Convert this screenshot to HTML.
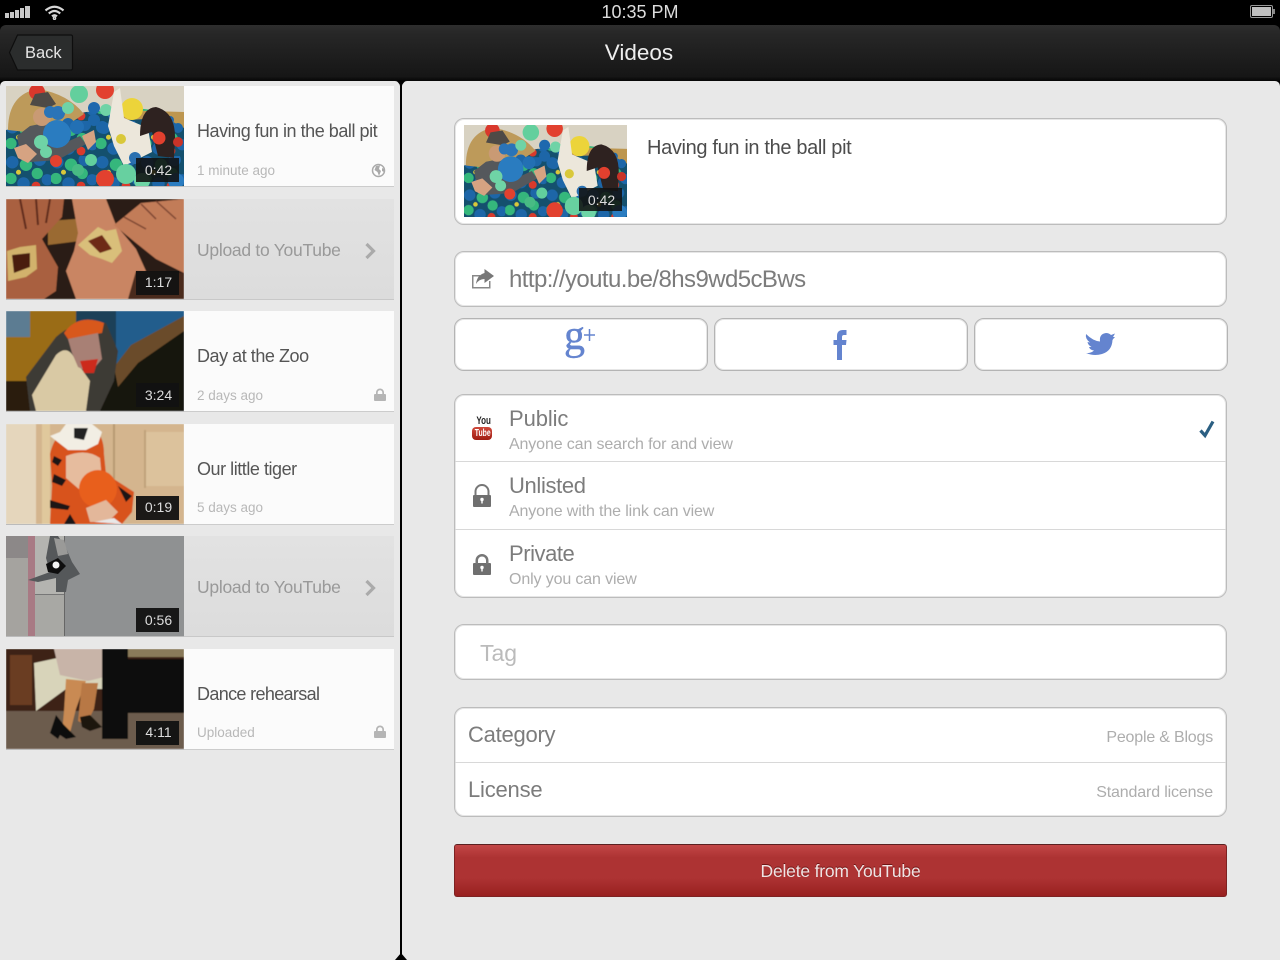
<!DOCTYPE html>
<html>
<head>
<meta charset="utf-8">
<title>Videos</title>
<style>
html,body{margin:0;padding:0;background:#000;}
#p{position:relative;width:1280px;height:960px;overflow:hidden;background:#000;font-family:"Liberation Sans",sans-serif;}
#p div,#p svg,#p span{position:absolute;}
.t{white-space:nowrap;line-height:1;}
.cell{left:184px;width:210px;height:100px;background:#fbfbfb;border-bottom:1px solid #ccc;}
.up{background:linear-gradient(#e2e2e2,#dcdcdc);border-bottom:1px solid #c8c8c8;}
.th{left:6px;width:178px;height:100px;overflow:hidden;border-bottom:1px solid #bbb;}
.dur{width:43px;left:137px;text-align:center;font-size:14px;color:#ddd;}
.box{background:#fff;border:1px solid #bcbcbc;box-shadow:inset 0 0 0 1px #e6e6e6;border-radius:10px;box-sizing:border-box;left:454px;width:773px;}
.name{font-size:18px;color:#555;left:197px;letter-spacing:-.46px;}
.sub{font-size:13.5px;color:#b8b8b8;left:197px;}
.up-t{left:197px;font-size:17.5px;color:#999;letter-spacing:-.27px;}
.big{font-size:22px;color:#7c7c7c;}
.small{font-size:16px;color:#adadad;left:509px;letter-spacing:-.13px;}
.hr{left:455px;width:771px;height:1px;background:#d8d8d8;}
</style>
</head>
<body>
<div id="p">
<svg width="0" height="0" style="left:0;top:0">
<defs>
<filter id="b"><feGaussianBlur stdDeviation=".6"/></filter>
<pattern id="balls" width="36" height="28" patternUnits="userSpaceOnUse" patternTransform="scale(1.25)">
<rect width="36" height="28" fill="#14506e"/>
<g fill="#1d66a8"><circle cx="5" cy="5" r="5"/><circle cx="27" cy="3" r="5"/><circle cx="14" cy="22" r="5"/><circle cx="33" cy="19" r="4.500"/></g>
<g fill="#35b77c"><circle cx="16" cy="7" r="5"/><circle cx="4" cy="18" r="4.500"/><circle cx="25" cy="14" r="4.500"/></g>
<g fill="#d93a2c"><circle cx="24" cy="24" r="3.500"/></g>
<g fill="#d9c83a"><circle cx="10" cy="13" r="2"/></g>
</pattern>
<g id="pit">
<rect width="178" height="100" fill="url(#balls)"/>
<path d="M0 0H178V28L130 22L80 26L60 30L0 44Z" fill="#d8d2c2"/>
<path d="M2 44Q2 8 32 3Q62 8 78 28L60 40L20 46Z" fill="#bd9a5a"/>
<path d="M108 24L178 26V42L160 32L120 34Z" fill="#bd964f"/>
<g fill="#1d66a8"><circle cx="62" cy="38" r="6"/><circle cx="88" cy="34" r="6"/><circle cx="98" cy="42" r="6"/><circle cx="172" cy="42" r="5"/><circle cx="164" cy="34" r="4"/></g>
<circle cx="100" cy="24" r="6" fill="#6fd3a6"/><circle cx="88" cy="22" r="6" fill="#1e68ae"/>
<circle cx="31" cy="6" r="8" fill="#d9382c"/><circle cx="73" cy="8" r="9" fill="#63cf9d"/><circle cx="99" cy="4" r="9" fill="#e2412f"/>
<circle cx="126" cy="23" r="11" fill="#ecd43a"/>
<path d="M11 50L24 40L44 36L52 60L74 50L80 58L52 74L24 76L14 66Z" fill="#55585c"/>
<circle cx="36" cy="31" r="9" fill="#c99a74"/><path d="M24 19L29 8L42 6L50 18L42 22Z" fill="#4e4a46"/>
<path d="M8 62L20 58L31 68L22 77L12 72Z" fill="#d6a382"/><path d="M76 50L88 44L90 56L82 64Z" fill="#d6a382"/>
<circle cx="52" cy="27" r="7" fill="#2a74b8"/><circle cx="44" cy="26" r="6" fill="#2a74b8"/><circle cx="62" cy="22" r="6" fill="#70d3a6"/>
<circle cx="51" cy="48" r="14" fill="#2a7cc0"/><circle cx="71" cy="41" r="7" fill="#2370b4"/><circle cx="35" cy="56" r="7" fill="#6fd3a6"/><circle cx="40" cy="66" r="6" fill="#6fd3a6"/>
<path d="M102 40L108 6L114 2L118 32L142 42L146 66L118 80L108 60Z" fill="#ece7db"/>
<path d="M134 50Q134 22 150 21Q170 26 169 54L168 72L152 70L146 46Z" fill="#2e2220"/>
<circle cx="153" cy="52" r="6.500" fill="#e2402e"/><circle cx="129" cy="72" r="6" fill="#2a70b0"/><circle cx="115" cy="53" r="5" fill="#d9c83a"/>
<circle cx="172" cy="56" r="5" fill="#c93328"/>
<circle cx="50" cy="75" r="6" fill="#e2412f"/><circle cx="99" cy="93" r="9" fill="#e2412f"/>
<circle cx="85" cy="74" r="6" fill="#62cf9d"/><circle cx="72" cy="84" r="6" fill="#48bb84"/>
<circle cx="120" cy="88" r="10" fill="#67d0a0"/><circle cx="136" cy="95" r="8" fill="#6ed5a6"/><circle cx="170" cy="95" r="8" fill="#2a7cc0"/>
</g>
<g id="lock" fill="#b5b5b5"><path d="M1 6h10a1 1 0 0 1 1 1v5a1 1 0 0 1-1 1H1a1 1 0 0 1-1-1V7a1 1 0 0 1 1-1z"/><path d="M2 6V4.500a4 4 0 0 1 8 0V6H8.300V4.500a2.300 2.300 0 0 0-4.600 0V6z"/></g>
</defs>
</svg>

<!-- status bar -->
<svg style="left:5px;top:5px" width="26" height="14"><g fill="#c8c8c8"><rect x="0" y="8" width="4" height="5"/><rect x="5" y="7" width="4" height="6"/><rect x="10" y="5" width="4" height="8"/><rect x="15" y="3" width="4" height="10"/><rect x="20" y="1" width="5" height="12"/></g></svg>
<svg style="left:44px;top:4px" width="21" height="16" fill="none" stroke="#d8d8d8" stroke-width="2.200"><path d="M1.500 6.500Q10.500 -1 19.500 6.500"/><path d="M4.800 9.500Q10.500 4.500 16.200 9.500"/><path d="M8 12.300Q10.500 10.200 13 12.300"/><circle cx="10.500" cy="14.200" r=".7"/></svg>
<div class="t" style="left:540px;width:200px;text-align:center;top:3px;font-size:18px;color:#ddd;">10:35 PM</div>
<div style="left:1250px;top:5px;width:23px;height:13px;border:1px solid #999;box-sizing:border-box;border-radius:2px;background:#000;"><div style="left:1px;top:1px;right:1px;bottom:1px;background:#c0c0c0;"></div></div>
<div style="left:1273px;top:9px;width:2px;height:5px;background:#888;"></div>

<!-- nav -->
<div style="left:0;top:25px;width:1280px;height:56px;border-radius:6px 6px 0 0;background:linear-gradient(#2e2e2e,#272727 15%,#161616 92%,#050505);"></div>
<svg style="left:8px;top:34px" width="66" height="38"><path d="M9.500 1H63a1.500 1.500 0 0 1 1.500 1.500V34.500a1.500 1.500 0 0 1-1.500 1.500H9.500L1.500 18.500Z" fill="#2b2d2d" stroke="#0e0e0e" stroke-width="1.200"/></svg>
<div class="t" style="left:25px;top:45px;font-size:16.500px;color:#e6e6e6;">Back</div>
<div class="t" style="left:539px;width:200px;text-align:center;top:42px;font-size:22.500px;color:#eee;">Videos</div>

<!-- panels -->
<div style="left:0;top:81px;width:400px;height:879px;background:#e8e8e8;border-radius:5px 5px 0 0;"></div>
<div style="left:402px;top:81px;width:878px;height:879px;background:#e8e8e8;border-radius:5px 5px 0 0;"></div>

<!-- row 1 -->
<div class="cell" style="top:86px"></div>
<div class="th" style="top:86px"><svg width="178" height="100"><use href="#pit"/><rect x="130" y="72" width="43" height="24" fill="#111" opacity=".88"/></svg></div>
<div class="t dur" style="top:163px;">0:42</div>
<div class="t name" style="top:122px;">Having fun in the ball pit</div>
<div class="t sub" style="top:164px;">1 minute ago</div>
<svg style="left:371px;top:163px" width="15" height="15"><circle cx="7.500" cy="7.500" r="6" fill="#fff" stroke="#aaa" stroke-width="1.500"/><path d="M5 3L9 2.500L8 6L10 8L8 13L6.500 9L3.500 7Z M11 5L13 6L13 9L11 8Z" fill="#aaa"/></svg>

<!-- row 2 -->
<div class="cell up" style="top:199px"></div>
<div class="th" style="top:199px"><svg width="178" height="100">
<g filter="url(#b)">
<rect width="178" height="100" fill="#2c1a12"/>
<path d="M42 22L70 20L74 42L42 46Z" fill="#9a6a32"/>
<path d="M0 0H58L56 18L36 40L52 68L50 92L38 100H0Z" fill="#a9603f"/>
<path d="M14 0L20 30M30 0L32 26M44 0L40 24" stroke="#5e2c1a" stroke-width="2" fill="none"/>
<path d="M66 0H100L110 26L130 50L140 72L122 100H70L60 72L68 52L72 34Z" fill="#c98563"/>
<path d="M108 26L135 4L178 0V74L150 60L130 44Z" fill="#c27c58"/>
<path d="M135 5L150 20M150 2L170 20M118 18L140 30" stroke="#7a4430" stroke-width="1.500" fill="none"/>
<path d="M130 72L178 74V100H122Z" fill="#4a2a1c"/>
<path d="M72 46L92 28L100 32L110 30L116 52L106 64L96 60L84 56Z" fill="#d9bf7a"/>
<path d="M82 42L96 36L106 50L94 54Z" fill="#6e2a16"/>
<path d="M1 52L14 48L30 46L31 70L20 78L2 82Z" fill="#d2b26c"/>
<path d="M6 56L24 54L24 68L8 74Z" fill="#4a1c10"/>
</g>
<rect x="130" y="72" width="43" height="24" fill="#111" opacity=".92"/>
</svg></div>
<div class="t up-t" style="top:242px;">Upload to YouTube</div>
<svg style="left:364px;top:242px" width="13" height="18"><path d="M2.500 2L9.500 9L2.500 16" fill="none" stroke="#aaa" stroke-width="3.200"/></svg>
<div class="t dur" style="top:275px;">1:17</div>

<!-- row 3 -->
<div class="cell" style="top:311px"></div>
<div class="th" style="top:311px"><svg width="178" height="100">
<g filter="url(#b)">
<rect width="178" height="100" fill="#1d3f58"/>
<rect width="70" height="100" fill="#9a6c16"/>
<rect x="0" width="24" height="26" fill="#5c7c92"/>
<rect x="0" y="70" width="40" height="30" fill="#2a1a0a"/>
<rect x="110" width="68" height="70" fill="#235d8c"/>
<path d="M70 100L122 46L178 20V100Z" fill="#161208"/>
<path d="M108 56L125 34L178 5V20L132 52L112 76Z" fill="#6a4c2c"/>
<path d="M20 66L50 26Q70 8 100 12L112 40L108 70L94 100H24Z" fill="#3e3a36"/>
<path d="M26 84L50 44Q62 32 70 50L84 70L80 100H30Z" fill="#d9c9a4"/>
<path d="M58 22Q72 2 98 12L96 22L62 28Z" fill="#d8581a"/>
<path d="M62 28L92 22L96 48L84 62L72 56L66 42Z" fill="#a88074"/>
<path d="M74 50L92 48L88 62L78 62Z" fill="#cc2a1e"/>
</g>
<rect x="130" y="72" width="43" height="24" fill="#111" opacity=".92"/>
</svg></div>
<div class="t name" style="top:347px;">Day at the Zoo</div>
<div class="t sub" style="top:389px;">2 days ago</div>
<svg style="left:374px;top:388px" width="12" height="14"><use href="#lock"/></svg>
<div class="t dur" style="top:388px;">3:24</div>

<!-- row 4 -->
<div class="cell" style="top:424px"></div>
<div class="th" style="top:424px"><svg width="178" height="100">
<g filter="url(#b)">
<rect width="178" height="100" fill="#d4b58e"/>
<rect width="30" height="100" fill="#e5d6bc"/>
<rect x="36" width="8" height="100" fill="#e0c89c"/>
<rect x="107" width="2" height="100" fill="#b89a72"/>
<rect x="140" y="8" width="38" height="54" fill="#dcc29c"/>
<rect x="138" y="6" width="2" height="58" fill="#bfa27a"/>
<path d="M44 100L46 62L44 30Q50 2 78 2Q98 4 98 30L100 50L128 68L126 88L116 100Z" fill="#d8531e"/>
<path d="M44 12L54 8L60 0H86L96 8L92 20L80 26L62 26Z" fill="#f2eee4"/>
<path d="M68 4L82 4L78 16L68 14Z" fill="#222"/>
<path d="M60 32Q80 24 94 34L96 56L74 66L60 54Z" fill="#e6bc9e"/>
<circle cx="92" cy="65" r="19" fill="#e85f1c"/>
<path d="M48 50L60 56L56 62L46 58ZM44 76L64 82L62 86L44 84ZM58 100L64 90L70 100ZM112 62L126 72L120 78ZM48 32L56 36L52 42L46 38Z" fill="#1b1512"/>
<path d="M80 84L100 76L112 88L102 98L84 98Z" fill="#e3b79a"/>
<path d="M88 98L108 94L116 100Z" fill="#e8e8e8"/>
</g>
<rect x="130" y="72" width="43" height="24" fill="#111" opacity=".95"/>
</svg></div>
<div class="t name" style="top:460px;">Our little tiger</div>
<div class="t sub" style="top:501px;">5 days ago</div>
<div class="t dur" style="top:500px;">0:19</div>

<!-- row 5 -->
<div class="cell up" style="top:536px"></div>
<div class="th" style="top:536px"><svg width="178" height="100">
<rect width="178" height="100" fill="#8f9192"/>
<rect width="58" height="100" fill="#b4b4b0"/>
<rect x="0" width="22" height="100" fill="#a5a39f"/>
<rect x="0" width="22" height="22" fill="#8c8888"/>
<rect x="22" width="7" height="100" fill="#a87a84"/>
<rect x="29" y="58" width="29" height="42" fill="#a8a8a4"/>
<rect x="29" y="58" width="29" height="1" fill="#777"/>
<rect x="58" width="1" height="100" fill="#666"/>
<path d="M44 0H52L60 12L66 26L74 38L62 44L60 56H50L50 42L32 46L22 44L44 36L40 22Z" fill="#55585a"/>
<path d="M48 2L58 4L62 18L52 20Z" fill="#9a9a98"/>
<path d="M40 28L52 22L60 30L52 38L42 36Z" fill="#0e0e0e"/><circle cx="50" cy="29" r="3.500" fill="#f4f4f4"/>
<rect x="130" y="72" width="43" height="24" fill="#171717"/>
</svg></div>
<div class="t up-t" style="top:579px;">Upload to YouTube</div>
<svg style="left:364px;top:579px" width="13" height="18"><path d="M2.500 2L9.500 9L2.500 16" fill="none" stroke="#aaa" stroke-width="3.200"/></svg>
<div class="t dur" style="top:613px;">0:56</div>

<!-- row 6 -->
<div class="cell" style="top:649px"></div>
<div class="th" style="top:649px"><svg width="178" height="100">
<g filter="url(#b)">
<rect width="178" height="100" fill="#6c5c4e"/>
<rect width="178" height="62" fill="#3c2418"/>
<rect x="120" y="10" width="58" height="54" fill="#0c0a0a"/>
<rect x="120" width="58" height="8" fill="#8a7a5a"/>
<rect x="4" y="6" width="22" height="50" fill="#6a3c22"/>
<path d="M28 14L56 8L100 10L100 40L60 40L30 62Z" fill="#d8d4ba"/>
<path d="M48 0H100L98 28L82 32L54 26Z" fill="#c8b4a8"/>
<path d="M60 30L80 32L70 60L64 84L56 84L58 62Z" fill="#c98a52"/>
<path d="M76 34L92 34L88 60L80 76L72 72Z" fill="#b87844"/>
<rect x="96" width="26" height="90" fill="#0c0c0c"/>
<path d="M44 84L50 66L58 76L70 88L60 90L54 86L52 90Z" fill="#0a0a0a"/>
<path d="M74 68L84 66L96 78L84 82L76 78Z" fill="#1c1210"/>
</g>
<rect x="130" y="72" width="43" height="24" fill="#111" opacity=".95"/>
</svg></div>
<div class="t name" style="top:685px;letter-spacing:-.65px;">Dance rehearsal</div>
<div class="t sub" style="top:726px;">Uploaded</div>
<svg style="left:374px;top:725px" width="12" height="14"><use href="#lock"/></svg>
<div class="t dur" style="top:725px;">4:11</div>

<!-- divider -->
<div style="left:400px;top:80px;width:2px;height:880px;background:#000;"></div>
<svg style="left:394px;top:80px" width="14" height="7"><path d="M2 0H12L7 6Z" fill="#000"/></svg>
<svg style="left:394px;top:953px" width="14" height="7"><path d="M1 7H13L7 0Z" fill="#000"/></svg>

<!-- title box -->
<div class="box" style="top:118px;height:107px;"></div>
<svg style="left:464px;top:125px;" width="163" height="92" viewBox="0 0 178 100" preserveAspectRatio="none"><use href="#pit"/></svg>
<div style="left:579px;top:188px;width:43px;height:23px;background:rgba(18,18,18,.88);"></div>
<div class="t" style="left:580px;width:43px;text-align:center;top:193px;font-size:14px;color:#ddd;">0:42</div>
<div class="t" style="left:647px;top:138px;font-size:20px;color:#4c4c4c;letter-spacing:-.35px;">Having fun in the ball pit</div>

<!-- URL -->
<div class="box" style="top:251px;height:56px;"></div>
<svg style="left:470px;top:268px" width="25" height="22"><path d="M2 7H10V8.500H3.500V19H19V13H20.500V20.500H2Z" fill="#888"/><path d="M14.500 1L24 8L14.500 15V11Q9 11 6 16Q7 7 14.500 5Z" fill="#777"/></svg>
<div class="t" style="left:509px;top:268px;font-size:24px;color:#7c7c7c;letter-spacing:-.58px;">http://youtu.be/8hs9wd5cBws</div>

<!-- social -->
<div class="box" style="top:318px;height:53px;width:254px;border-color:#b4b4b4;"></div>
<div class="box" style="top:318px;height:53px;width:254px;left:714px;border-color:#b4b4b4;"></div>
<div class="box" style="top:318px;height:53px;width:254px;left:974px;border-color:#b4b4b4;"></div>
<div class="t" style="left:564px;top:315px;font-family:'Liberation Serif',serif;font-size:42px;color:#6484cf;-webkit-text-stroke:.4px #6484cf;">g</div>
<svg style="left:584px;top:329px" width="13" height="13"><path d="M5.500 0V12M0 6H11" stroke="#6484cf" stroke-width="1.500" fill="none"/></svg>
<svg style="left:832px;top:329px" width="16" height="31"><path d="M5 31V16H1.500V11H5V7Q5 1 11 1H14.500V6H12Q10 6 10 8V11H14.500L14 16H10V31Z" fill="#6484cf"/></svg>
<svg style="left:1085px;top:331px" width="31" height="27"><path d="M1 3Q8 10 15 10.500Q14 3 21 2Q24 2 26 4L30 2.500L28 6L30 6Q28 8 27.500 9Q27 20 17 23Q9 25.500 1 22Q6 22.500 9 19.500Q5 19 4 16L6.500 16Q3 14 2.500 11L5 11.500Q0 8 1 3Z" fill="#6484cf"/></svg>

<!-- privacy -->
<div class="box" style="top:394px;height:204px;"></div>
<div class="hr" style="top:461px"></div>
<div class="hr" style="top:529px"></div>
<div class="t" style="left:475px;top:417px;width:14px;text-align:center;font-size:10px;font-weight:700;color:#222;transform:scale(.8,1.1);">You</div>
<div style="left:472px;top:427px;width:20px;height:13px;border-radius:4px;background:linear-gradient(#d04a3c,#a01c12);"></div>
<div class="t" style="left:472px;top:429px;width:20px;text-align:center;font-size:9.500px;font-weight:700;color:#fff;transform:scale(.72,1.05);">Tube</div>
<svg style="left:473px;top:483px" width="18" height="24"><path d="M1 12h16a1 1 0 0 1 1 1v10a1 1 0 0 1-1 1H1a1 1 0 0 1-1-1V13a1 1 0 0 1 1-1z" fill="#6f6f6f"/><path d="M1.500 12V8.500a7.500 7.500 0 0 1 15 0V12H14.500V8.500a5.500 5.500 0 0 0-11 0V12Z" fill="#777"/><circle cx="9" cy="16.500" r="1.700" fill="#fff"/><rect x="8.300" y="17" width="1.400" height="3.500" fill="#fff"/></svg>
<svg style="left:473px;top:553px" width="18" height="22"><path d="M1 10h16a1 1 0 0 1 1 1v10a1 1 0 0 1-1 1H1a1 1 0 0 1-1-1V11a1 1 0 0 1 1-1z" fill="#6f6f6f"/><path d="M2.500 11V7.500a6.500 6.500 0 0 1 13 0V11H13V7.500a4 4 0 0 0-8 0V11Z" fill="#777"/><circle cx="9" cy="14.500" r="1.700" fill="#fff"/><rect x="8.300" y="15" width="1.400" height="3.500" fill="#fff"/></svg>
<div class="t big" style="left:509px;top:408px;letter-spacing:-.1px;">Public</div>
<div class="t small" style="top:437px;">Anyone can search for and view</div>
<div class="t big" style="left:509px;top:475px;letter-spacing:-.35px;">Unlisted</div>
<div class="t small" style="top:504px;">Anyone with the link can view</div>
<div class="t big" style="left:509px;top:543px;letter-spacing:-.45px;">Private</div>
<div class="t small" style="top:572px;">Only you can view</div>
<svg style="left:1197px;top:419px" width="19" height="20"><path d="M3.500 11.500L8 16.500L16 2.500" fill="none" stroke="#2b5f82" stroke-width="3.200"/></svg>

<!-- tag -->
<div class="box" style="top:624px;height:56px;"></div>
<div class="t" style="left:480px;top:642px;font-size:23px;color:#bbb;">Tag</div>

<!-- category -->
<div class="box" style="top:707px;height:110px;"></div>
<div class="hr" style="top:762px"></div>
<div class="t big" style="left:468px;top:724px;letter-spacing:-.25px;">Category</div>
<div class="t big" style="left:468px;top:779px;letter-spacing:-.2px;">License</div>
<div class="t" style="right:67px;top:730px;font-size:16px;color:#adadad;letter-spacing:-.2px;">People &amp; Blogs</div>
<div class="t" style="right:67px;top:785px;font-size:16px;color:#adadad;letter-spacing:-.15px;">Standard license</div>

<!-- delete -->
<div style="left:454px;top:844px;width:773px;height:53px;border-radius:3px;box-sizing:border-box;border:1px solid #7d2222;border-top-color:#5a2020;background:linear-gradient(#c24646,#ad3333 25%,#ad3333 65%,#98201f);"></div>
<div class="t" style="left:454px;width:773px;text-align:center;top:863px;font-size:17.500px;color:#f0e4e4;letter-spacing:-.2px;text-shadow:0 -1px 0 rgba(70,0,0,.6);">Delete from YouTube</div>
</div>
</body>
</html>
